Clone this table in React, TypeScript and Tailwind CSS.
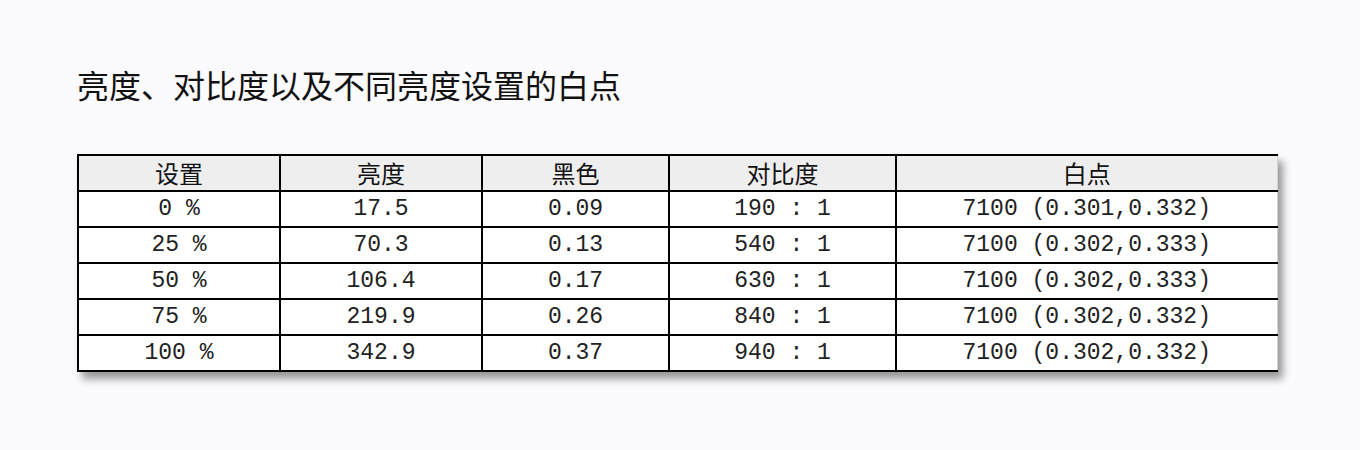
import React from "react";

const COLUMNS = [
  { label: "设置", width: "w-[202px]" },
  { label: "亮度", width: "w-[202px]" },
  { label: "黑色", width: "w-[187px]" },
  { label: "对比度", width: "w-[227px]" },
  { label: "白点", width: "w-[381px]" },
];

const ROWS: string[][] = [
  ["0 %", "17.5", "0.09", "190 : 1", "7100 (0.301,0.332)"],
  ["25 %", "70.3", "0.13", "540 : 1", "7100 (0.302,0.333)"],
  ["50 %", "106.4", "0.17", "630 : 1", "7100 (0.302,0.333)"],
  ["75 %", "219.9", "0.26", "840 : 1", "7100 (0.302,0.332)"],
  ["100 %", "342.9", "0.37", "940 : 1", "7100 (0.302,0.332)"],
];

// last column has only a faint right edge in the source
const cellBorder = (last: boolean) =>
  last
    ? "border-y-2 border-l-2 border-r border-y-black border-l-black border-r-[#d4d4d4]"
    : "border-2 border-black";

export default function App() {
  return (
    <div className="w-[1360px] h-[450px] bg-[#fbfafc] pl-[77px] pt-[68px] font-['Noto_Sans_CJK_SC',sans-serif]">
      <h1 className="text-[32px] leading-[32px] text-[#111] font-normal">
        亮度、对比度以及不同亮度设置的白点
      </h1>

      <table className="mt-[54px] w-[1199px] table-fixed border-collapse shadow-[5px_7px_8px_rgba(0,0,0,0.4)] bg-white">
        <thead>
          <tr className="h-[36px] bg-[#efeeef]">
            {COLUMNS.map((col, i) => (
              <th
                key={col.label}
                className={`${col.width} ${cellBorder(i === COLUMNS.length - 1)} p-0 text-center text-[24px] leading-[34px] font-normal text-[#111]`}
              >
                {col.label}
              </th>
            ))}
          </tr>
        </thead>
        <tbody>
          {ROWS.map((row, r) => (
            <tr key={r} className="h-[36px]">
              {row.map((cell, c) => (
                <td
                  key={c}
                  className={`${cellBorder(c === row.length - 1)} p-0 text-center font-['Liberation_Mono',monospace] text-[23px] leading-[34px] text-[#222]`}
                >
                  <span className="whitespace-pre">{cell}</span>
                </td>
              ))}
            </tr>
          ))}
        </tbody>
      </table>
    </div>
  );
}
